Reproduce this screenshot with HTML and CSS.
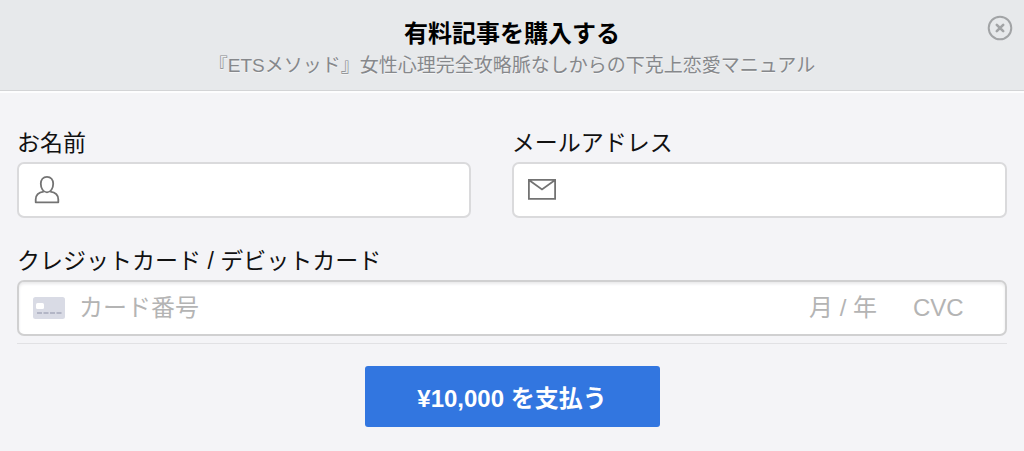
FILE: index.html
```html
<!DOCTYPE html>
<html lang="ja">
<head>
<meta charset="utf-8">
<meta name="viewport" content="width=device-width, initial-scale=1">
<title>有料記事を購入する</title>
<link rel="stylesheet" href="styles.css">
</head>
<body>
<header class="header">
  <h1 class="title">有料記事を購入する</h1>
  <p class="subtitle">『ETSメソッド』女性心理完全攻略脈なしからの下克上恋愛マニュアル</p>
  <button class="close" type="button" aria-label="閉じる">
    <svg width="26" height="26" viewBox="0 0 26 26" fill="none" stroke="#a2a4a6">
      <circle cx="13" cy="13" r="11.3" stroke-width="2"/>
      <path d="M9.800 9.800l6.400 6.400M16.200 9.800l-6.400 6.400" stroke-width="2.6" stroke-linecap="round"/>
    </svg>
  </button>
</header>
<form class="form">
  <div class="row">
    <div class="field">
      <label class="label" for="name">お名前</label>
      <div class="box">
        <svg class="icon" width="28" height="30" viewBox="0 0 28 30" fill="none" stroke="#737373" stroke-width="1.8" stroke-linejoin="round">
          <path d="M14 1.800c-3.900 0-6.200 2.900-6.200 7 0 4.200 2.300 8.500 6.200 8.500s6.200-4.300 6.200-8.500c0-4.100-2.300-7-6.200-7z"/>
          <path d="M10.800 16.600C5.400 17.200 2.700 20.200 2.700 24.600v2.700h22.600v-2.700c0-4.400-2.700-7.400-8.100-8"/>
        </svg>
        <input class="input" id="name" type="text">
      </div>
    </div>
    <div class="field">
      <label class="label" for="email">メールアドレス</label>
      <div class="box">
        <svg class="icon" width="28" height="30" viewBox="0 0 28 30" fill="none" stroke="#737373" stroke-width="1.800">
          <path d="M.9 4.900h26.200v19H.9zM.9 4.900L14 14.500 27.100 4.900"/>
        </svg>
        <input class="input" id="email" type="email">
      </div>
    </div>
  </div>
  <div class="field">
    <label class="label" for="card">クレジットカード / デビットカード</label>
    <div class="box box-card">
      <svg class="icon-card" width="32" height="22" viewBox="0 0 32 22">
        <rect width="32" height="22" rx="2.500" fill="#d9dbe5"/>
        <rect x="3" y="6" width="8" height="6" rx="1.500" fill="#fff"/>
        <path d="M4 16h5M10.500 16h5M17 16h5M23.500 16h5" stroke="#b3b6c6" stroke-width="1.800"/>
      </svg>
      <input class="input" id="card" type="text" placeholder="カード番号">
      <input class="input expiry" type="text" placeholder="月 / 年" aria-label="有効期限">
      <input class="input cvc" type="text" placeholder="CVC" aria-label="CVC">
    </div>
  </div>
  <div class="actions">
    <button class="pay" type="submit">¥10,000 を支払う</button>
  </div>
</form>
</body>
</html>
```
FILE: styles.css
```css
* {
  box-sizing: border-box;
}

body {
  margin: 0;
  background: #f4f4f7;
  color: #111;
  font-family: "Liberation Sans", "Noto Sans CJK JP", sans-serif;
}

.header {
  position: relative;
  padding: 18px 64px 8px;
  background: #e7e9eb;
  border-bottom: 1px solid #d3d4d6;
  box-shadow: 0 2px 0 #fdfdfe;
  text-align: center;
}

.title {
  margin: 0;
  color: #000;
  font-size: 24px;
  font-weight: 700;
  line-height: 32px;
}

.subtitle {
  margin: 0;
  color: #86888b;
  font-size: 19px;
  line-height: 32px;
  text-shadow: 0 1px 0 #f4f5f6;
}

.close {
  position: absolute;
  top: 15px;
  right: 11px;
  width: 26px;
  height: 26px;
  padding: 0;
  border: 0;
  background: none;
}

.close svg {
  display: block;
}

.form {
  padding: 37px 17px 24px;
}

.row {
  display: grid;
  grid-template-columns: 11fr 12fr;
  column-gap: 41px;
  margin-bottom: 28px;
}

.field {
  min-width: 0;
}

.label {
  display: block;
  margin-bottom: 4px;
  font-size: 23px;
  line-height: 30px;
}

.box {
  display: flex;
  align-items: center;
  height: 56px;
  padding: 0 14px;
  border: 2px solid #dadadc;
  border-radius: 7px;
  background: #fff;
}

.box-card {
  border-color: #d0d0d1;
  box-shadow: inset 0 2px 3px #e9e9eb;
}

.icon,
.icon-card {
  flex: none;
}

.icon-card {
  margin-right: 14px;
}

.input {
  flex: 1;
  min-width: 0;
  height: 40px;
  padding: 0;
  border: 0;
  outline: 0;
  background: none;
  color: #111;
  font: 24px "Liberation Sans", "Noto Sans CJK JP", sans-serif;
}

.input::placeholder {
  color: #b4b4b4;
  opacity: 1;
}

.expiry {
  flex: none;
  width: 104px;
}

.cvc {
  flex: none;
  width: 78px;
}

.actions {
  display: flex;
  justify-content: center;
  margin-top: 7px;
  padding-top: 22px;
  border-top: 1px solid #e1e1e4;
}

.pay {
  width: 295px;
  height: 61px;
  border: 0;
  border-radius: 3px;
  background: #3276e0;
  color: #fff;
  font: 700 24px "Liberation Sans", "Noto Sans CJK JP", sans-serif;
}
```
